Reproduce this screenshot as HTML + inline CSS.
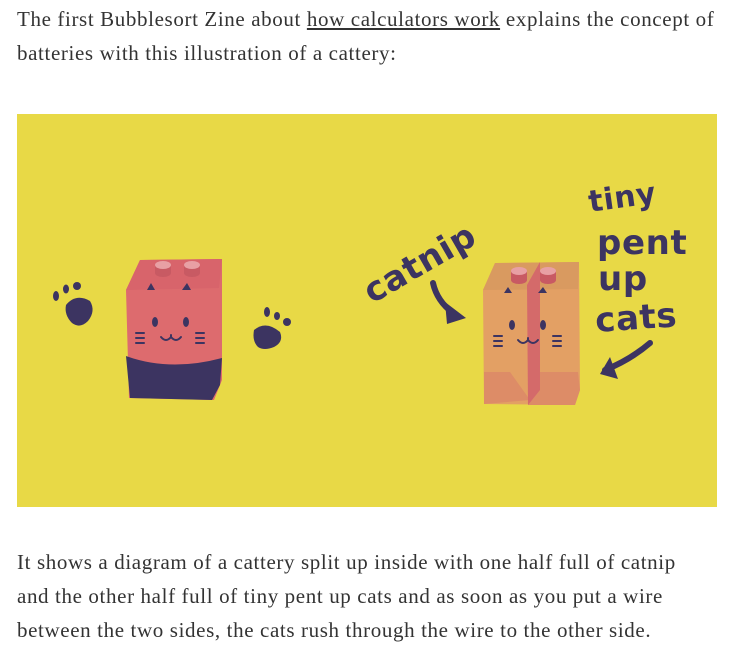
<!DOCTYPE html>
<html><head><meta charset="utf-8"><style>
html,body{margin:0;padding:0;background:#fff;}
body{width:734px;height:656px;overflow:hidden;font-family:"Liberation Serif",serif;color:#333;font-size:21px;letter-spacing:0.62px;line-height:34px;}
p{margin:0;position:absolute;left:17px;width:712px;white-space:nowrap;}
a{color:#333;text-decoration:underline;}
svg{position:absolute;left:17px;top:114px;}
</style></head><body>
<p style="top:2px">The first Bubblesort Zine about <a>how calculators work</a> explains the concept of<br>batteries with this illustration of a cattery:</p>
<svg width="700" height="393" viewBox="17 114 700 393">
<rect x="17" y="114" width="700" height="393" fill="#e8d946"/>
<g fill="#3c3461">
<path d="M66 305 q10 -12 24 -4 q6 10 -2 20 q-8 8 -16 2 q-8 -8 -6 -18z"/>
<ellipse cx="56" cy="296" rx="3" ry="5"/><ellipse cx="66" cy="289" rx="3" ry="4.5"/><ellipse cx="77" cy="286" rx="4" ry="4"/>
<path d="M254 330 q12 -10 26 2 q4 10 -6 15 q-10 4 -16 0 q-6 -6 -4 -17z"/>
<ellipse cx="267" cy="312" rx="3" ry="5"/><ellipse cx="277" cy="316" rx="3" ry="4"/><ellipse cx="287" cy="322" rx="4" ry="4"/>
</g>
<path d="M126 290 L140 260 L222 259 L222 380 L214 400 L129 398 Z" fill="#dd6b6e"/>
<path d="M126 290 L140 260 L222 259 L219 288 Z" fill="#d8646b"/>
<path d="M126 356 Q170 372 222 358 L220 385 L212 400 L130 398 Z" fill="#3c3461"/>
<ellipse cx="163" cy="273" rx="8" ry="4" fill="#c85a63"/><rect x="155" y="265" width="16" height="8" fill="#c85a63"/><ellipse cx="163" cy="265" rx="8" ry="4" fill="#e8a0a4"/>
<ellipse cx="192" cy="273" rx="8" ry="4" fill="#c85a63"/><rect x="184" y="265" width="16" height="8" fill="#c85a63"/><ellipse cx="192" cy="265" rx="8" ry="4" fill="#e8a0a4"/>
<g fill="#3c3461"><path d="M147 290 L151 283 L155 290Z"/><path d="M182 290 L187 283 L191 290Z"/>
<ellipse cx="155" cy="322" rx="3" ry="5"/><ellipse cx="186" cy="322" rx="3" ry="5"/></g>
<g stroke="#3c3461" stroke-width="2" fill="none" stroke-linecap="round">
<path d="M161 337 q5 6 10 0 q5 6 10 0"/><path d="M171 335 v2"/>
<path d="M136 333h8M136 338h8M136 343h8M196 333h8M196 338h8M196 343h8"/></g>
<path d="M483 290 L495 263 L579 262 L580 390 L575 405 L484 404 Z" fill="#e3a064"/>
<path d="M483 290 L495 263 L579 262 L578 289 Z" fill="#d99a60"/>
<path d="M484 372 L510 372 L530 400 L484 404Z M540 372 L578 372 L580 390 L575 405 L528 405 Z" fill="#dd8c67"/>
<path d="M527 285 L540 262 L540 390 L528 405 Z" fill="#d46a6a"/>
<rect x="511" y="271" width="16" height="9" fill="#c85a63"/><ellipse cx="519" cy="280" rx="8" ry="4" fill="#c85a63"/><ellipse cx="519" cy="271" rx="8" ry="4" fill="#e8a0a4"/>
<rect x="540" y="271" width="16" height="9" fill="#c85a63"/><ellipse cx="548" cy="280" rx="8" ry="4" fill="#c85a63"/><ellipse cx="548" cy="271" rx="8" ry="4" fill="#e8a0a4"/>
<g fill="#3c3461"><path d="M504 293 L508 287 L512 293Z"/><path d="M538 293 L543 287 L547 293Z"/>
<ellipse cx="512" cy="325" rx="3" ry="5"/><ellipse cx="543" cy="325" rx="3" ry="5"/></g>
<g stroke="#3c3461" stroke-width="2" fill="none" stroke-linecap="round">
<path d="M518 340 q5 6 10 0 q5 6 10 0"/><path d="M528 338 v2"/>
<path d="M494 336h8M494 341h8M494 346h8M553 336h8M553 341h8M553 346h8"/></g>
<g fill="#3c3461" font-family="'DejaVu Sans',sans-serif" font-weight="bold">
<text x="0" y="0" font-size="34" transform="translate(372 304) rotate(-30)">catnip</text>
<text x="590" y="212" font-size="30" transform="rotate(-8 590 212)">tiny</text>
<text x="597" y="254" font-size="34">pent</text>
<text x="598" y="290" font-size="34">up</text>
<text x="596" y="332" font-size="34" transform="rotate(-4 596 332)">cats</text>
</g>
<g stroke="#3c3461" stroke-width="6" fill="none" stroke-linecap="round">
<path d="M433 283 q4 18 20 30"/><path d="M650 343 q-20 17 -45 27"/></g>
<g fill="#3c3461"><path d="M445 302 L466 318 L447 324Z"/><path d="M610 357 L600 374 L618 379Z"/></g>
</svg>
<p style="top:545px">It shows a diagram of a cattery split up inside with one half full of catnip<br>and the other half full of tiny pent up cats and as soon as you put a wire<br>between the two sides, the cats rush through the wire to the other side.</p>
</body></html>
